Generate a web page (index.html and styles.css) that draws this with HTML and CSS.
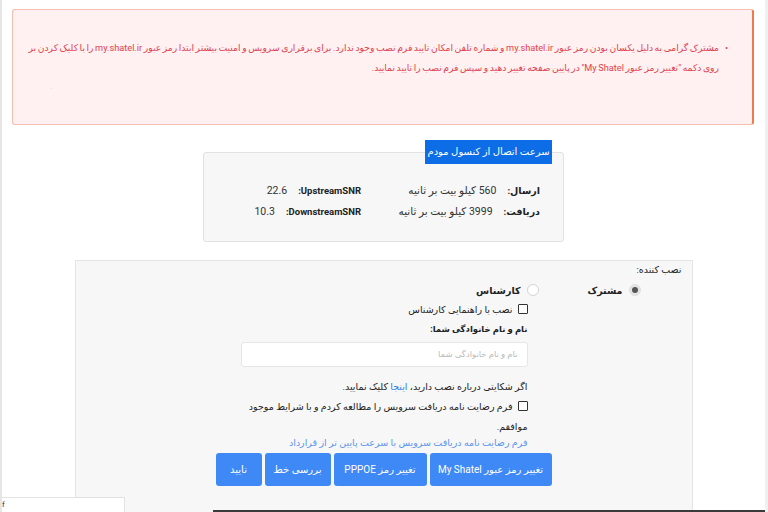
FILE: index.html
```html
<!DOCTYPE html>
<html lang="fa" dir="rtl">
<head>
<meta charset="utf-8">
<title>فرم نصب</title>
<link rel="stylesheet" href="styles.css">
</head>
<body>
<div class="page">
  <div class="alert">
    <ul class="alert-list">
      <li>مشترک گرامی به دلیل یکسان بودن رمز عبور my.shatel.ir و شماره تلفن امکان تایید فرم نصب وجود ندارد. برای برقراری سرویس و امنیت بیشتر ابتدا رمز عبور my.shatel.ir را با کلیک کردن بر<br>روی دکمه "تغییر رمز عبور My Shatel" در پایین صفحه تغییر دهید و سپس فرم نصب را تایید نمایید.</li>
    </ul>
    <span class="alert-dot">.</span>
  </div>

  <div class="modem">
    <div class="modem-tab">سرعت اتصال از کنسول مودم</div>
    <div class="modem-grid">
      <div class="cell"><b>ارسال:</b><span>560 کیلو بیت بر ثانیه</span></div>
      <div class="cell"><b>UpstreamSNR:</b><span>22.6</span></div>
      <div class="cell"><b>دریافت:</b><span>3999 کیلو بیت بر ثانیه</span></div>
      <div class="cell"><b>DownstreamSNR:</b><span>10.3</span></div>
    </div>
  </div>

  <div class="form">
    <div class="form-title">نصب کننده:</div>
    <div class="radio-row">
      <label class="radio"><span class="radio-dot checked"></span><b>مشترک</b></label>
      <label class="radio"><span class="radio-dot"></span><b>کارشناس</b></label>
    </div>
    <div class="content">
      <div class="check-row"><span class="box"></span>نصب با راهنمایی کارشناس</div>
      <div class="field-label">نام و نام خانوادگی شما:</div>
      <div class="input">نام و نام خانوادگی شما</div>
      <div class="complaint">اگر شکایتی درباره نصب دارید، <a class="link">اینجا</a> کلیک نمایید.</div>
      <div class="agree"><span class="box"></span>فرم رضایت نامه دریافت سرویس را مطالعه کردم و با شرایط موجود<br>موافقم.</div>
      <div class="form-link">فرم رضایت نامه دریافت سرویس با سرعت پایین تر از قرارداد</div>
    </div>
    <div class="buttons">
      <span class="btn btn-1">تغییر رمز عبور My Shatel</span>
      <span class="btn btn-2">تغییر رمز PPPOE</span>
      <span class="btn btn-3">بررسی خط</span>
      <span class="btn btn-4">تایید</span>
    </div>
  </div>

  <div class="status">f</div>
  <div class="bottom-line"></div>
</div>
</body>
</html>
```

FILE: styles.css
```css
* { box-sizing: border-box; }
html, body {
  margin: 0;
  padding: 0;
  background: #fff;
}
body {
  font-family: Roboto, "DejaVu Sans", sans-serif;
  color: #222;
  font-size: 10px;
}
.page {
  position: relative;
  width: 768px;
  height: 512px;
  overflow: hidden;
  border-left: 2px solid #e6e6e6;
  border-right: 3px solid #f0f0f0;
  direction: rtl;
  display: flex;
  flex-direction: column;
  align-items: center;
}

/* alert */
.alert {
  position: relative;
  align-self: stretch;
  margin: 9px 11px 0 10px;
  height: 116px;
  background: #fff0f1;
  border: 1px solid #f4bfae;
  border-right: 2px solid #ef7a4c;
  border-radius: 3px;
  color: #e0414f;
  font-size: 9.2px;
  word-spacing: -0.7px;
  line-height: 20px;
  padding-top: 28px;
}
.alert-list {
  margin: 0;
  padding: 0 33px 0 0;
  list-style: none;
}
.alert-list li {
  position: relative;
  white-space: nowrap;
}
.alert-list li::before {
  content: "•";
  position: absolute;
  right: -9px;
  top: 0;
}
.alert-dot {
  position: absolute;
  left: 37px;
  top: 66px;
  color: #e6d6d6;
}

/* modem */
.modem {
  position: relative;
  width: 361px;
  height: 90px;
  margin-top: 27px;
  background: #f7f7f7;
  border: 1px solid #e2e2e2;
  border-radius: 3px;
  padding: 27px 23px 0 0;
}
.modem-tab {
  position: absolute;
  top: -13px;
  right: 11px;
  width: 127px;
  height: 24px;
  line-height: 24px;
  text-align: center;
  background: #0c6de6;
  color: #fff;
  font-size: 10px;
}
.modem-grid {
  display: grid;
  grid-template-columns: 179px 179px;
  grid-auto-rows: 21px;
  line-height: 21px;
}
.cell {
  display: flex;
  gap: 11px;
}
.cell b {
  font-weight: bold;
  font-size: 9.5px;
}
.cell span {
  color: #333;
  font-size: 10.5px;
}

/* form */
.form {
  width: 618px;
  flex: 1;
  margin-top: 18px;
  background: #f7f7f7;
  border: 1px solid #e4e4e4;
  border-bottom: none;
  padding: 0 10px 0 0;
}
.form-title {
  line-height: 17px;
  font-size: 9.5px;
}
.radio-row {
  display: flex;
  margin: 2px 41px 0 0;
  height: 20px;
  align-items: center;
}
.radio {
  width: 102px;
  display: flex;
  align-items: center;
  gap: 6px;
  font-size: 9.5px;
}
.radio-dot {
  width: 12px;
  height: 12px;
  border-radius: 50%;
  border: 1px solid #d4d4d4;
  background: #fff;
  position: relative;
}
.radio-dot.checked {
  background: #e4e4e4;
  border-color: #e0e0e0;
}
.radio-dot.checked::after {
  content: "";
  position: absolute;
  width: 6px;
  height: 6px;
  border-radius: 50%;
  background: #555;
  top: 2px;
  right: 2px;
}
.content {
  margin-right: 154px;
  width: 287px;
}
.check-row, .agree {
  line-height: 20px;
  font-size: 9.5px;
}
.box {
  display: inline-block;
  width: 10px;
  height: 10px;
  border: 1px solid #333;
  border-radius: 1px;
  background: #fff;
  vertical-align: -1px;
  margin-left: 5px;
}
.field-label {
  font-weight: bold;
  line-height: 19px;
  font-size: 8.5px;
}
.input {
  margin-top: 3px;
  height: 25px;
  background: #fff;
  border: 1px solid #e6e6e6;
  border-radius: 3px;
  color: #bcbcbc;
  font-size: 8.5px;
  line-height: 23px;
  padding-right: 9px;
}
.complaint {
  margin-top: 10px;
  line-height: 20px;
  font-size: 9.5px;
}
.link { color: #2f7fe6; }
.form-link {
  line-height: 12px;
  color: #5c95ee;
  font-size: 9.5px;
}
.buttons {
  display: flex;
  gap: 3px;
  margin: 4px 130px 0 0;
}
.btn {
  height: 33px;
  line-height: 33px;
  background: #3f89f6;
  color: #fff;
  border-radius: 3px;
  font-size: 10px;
  text-align: center;
  white-space: nowrap;
}
.btn-1 { width: 122px; }
.btn-2 { width: 93px; }
.btn-3 { width: 66px; }
.btn-4 { width: 46px; }

.status {
  position: absolute;
  left: -2px;
  bottom: 0;
  width: 125px;
  height: 15px;
  background: #fff;
  border-top: 1px solid #e2e2e2;
  border-right: 1px solid #e2e2e2;
  direction: ltr;
  font-size: 8px;
  line-height: 14px;
  padding-left: 2px;
  color: #333;
}
.bottom-line {
  position: absolute;
  left: 211px;
  right: -3px;
  bottom: 0;
  height: 2px;
  background: #3a3a3a;
}
```
